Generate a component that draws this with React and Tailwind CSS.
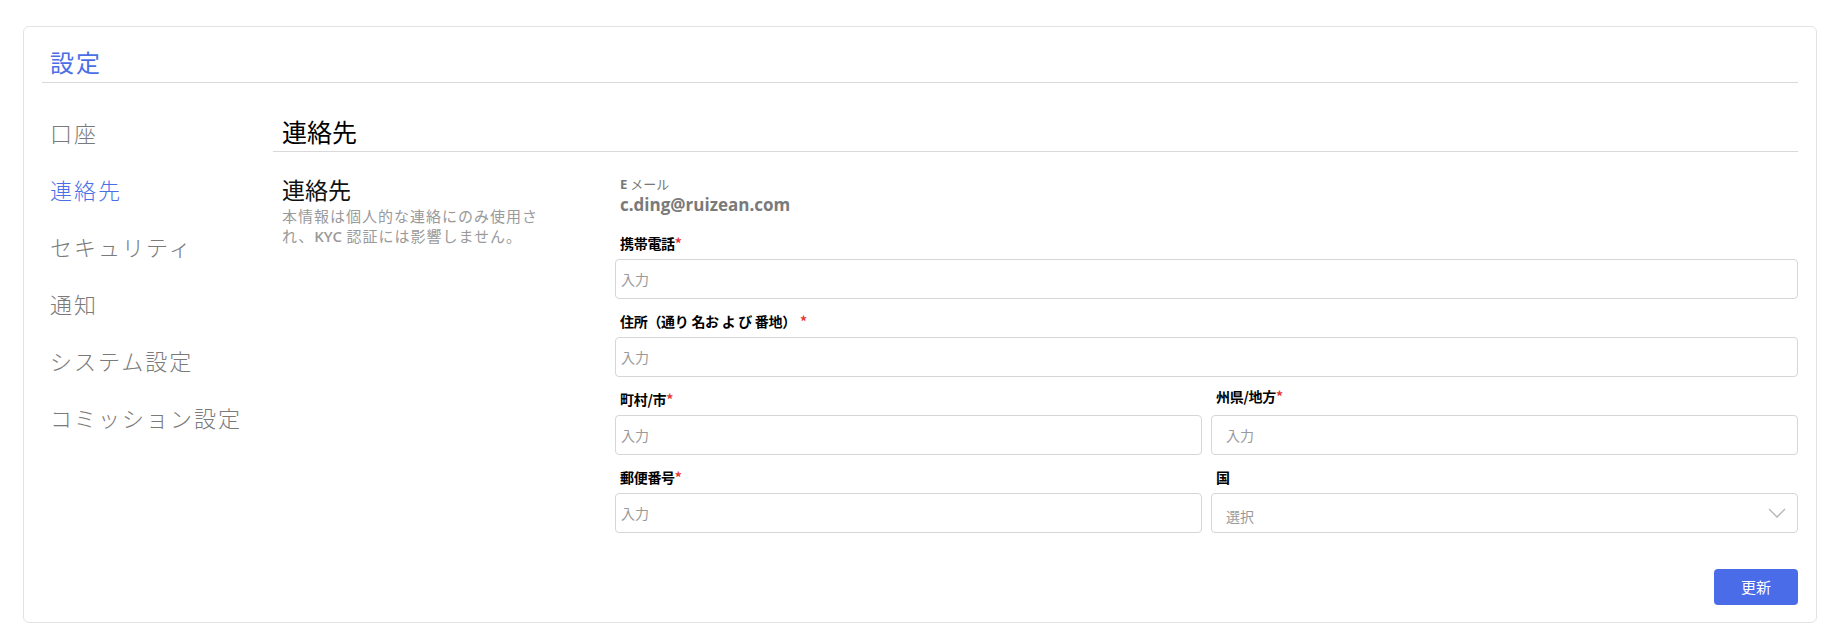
import React from "react";

const JP = { fontFamily: '"Noto Sans CJK JP", "Noto Sans", sans-serif' };
const LAT = { fontFamily: '"Open Sans", "Noto Sans CJK JP", sans-serif' };

function Label({ children, required = true, className = "" }) {
  return (
    <div
      className={"h-[20px] leading-[20px] mb-[6px] text-[14px] font-bold text-black tracking-[-0.3px] " + className}
      style={JP}
    >
      {children}
      {required && <span className="text-[#e53935]">*</span>}
    </div>
  );
}

function Input({ wide = false }) {
  return (
    <div
      className={
        "h-[40px] rounded-[4px] border border-[#d6d6d6] flex items-center text-[14px] text-[#9a9a9a] bg-white " +
        (wide ? "pl-[14px]" : "pl-[5px]")
      }
      style={JP}
    >
      入力
    </div>
  );
}

export default function App() {
  const nav = ["口座", "連絡先", "セキュリティ", "通知", "システム設定", "コミッション設定"];
  return (
    <div className="w-[1836px] h-[640px] bg-white pt-[26px] pl-[23px] pr-[19px]" style={JP}>
      <div className="h-[597px] rounded-[6px] border border-[#e3e3e3] px-[18px] pt-[18px]">
        {/* title */}
        <div className="border-b border-[#d9d9d9] pb-[3px] pl-[8px]">
          <div className="text-[24px] leading-[34px] text-[#4a6ee6] tracking-[2px]" style={JP}>
            設定
          </div>
        </div>

        {/* body */}
        <div className="flex mt-[32px]">
          {/* sidebar */}
          <div className="w-[231px] pl-[8px] pt-[2px] flex flex-col gap-[27px]">
            {nav.map((n) => (
              <div
                key={n}
                className={
                  "text-[22px] leading-[30px] tracking-[2px] font-light " +
                  (n === "連絡先" ? "text-[#4a6ee6]" : "text-[#7a7a7a]")
                }
                style={JP}
              >
                {n}
              </div>
            ))}
          </div>

          {/* main section */}
          <div className="flex-1">
            <div className="border-b border-[#d9d9d9] pb-[4px] pl-[9px]">
              <div className="text-[25px] leading-[32px] text-black" style={JP}>
                連絡先
              </div>
            </div>

            <div className="flex pt-[22px]">
              {/* left description column */}
              <div className="w-[342px] pl-[9px]">
                <div className="text-[23px] leading-[30px] text-[#111]" style={JP}>
                  連絡先
                </div>
                <div
                  className="mt-[2px] max-w-[265px] text-[15px] leading-[20px] tracking-[1px] text-[#9a9a9a]"
                  style={JP}
                >
                  本情報は個人的な連絡にのみ使用され、<span style={LAT} className="font-semibold tracking-[0px]">KYC</span> 認証には影響しません。
                </div>
              </div>

              {/* form */}
              <div className="flex-1 pt-[1px]">
                <div className="pl-[5px] text-[13px] leading-[18px] text-[#777]" style={JP}>
                  <span style={LAT} className="font-bold">E</span> メール
                </div>
                <div className="pl-[5px] text-[17px] leading-[24px] font-bold text-[#7a7a7a]" style={LAT}>
                  c.ding@ruizean.com
                </div>

                <div className="mt-[16px]">
                  <Label className="pl-[5px]">携帯電話</Label>
                  <Input />
                </div>

                <div className="mt-[12px]">
                  <Label className="pl-[5px]">
                    住所（通り 名お よ び 番地）<span className="ml-[4px]"></span>
                  </Label>
                  <Input />
                </div>

                <div className="mt-[12px] grid grid-cols-2 gap-x-[9px]">
                  <div>
                    <Label className="pl-[5px]">町村/市</Label>
                    <Input />
                  </div>
                  <div>
                    <Label className="pl-[5px] -mt-[3px] mb-[9px]">州県/地方</Label>
                    <Input wide />
                  </div>
                </div>

                <div className="mt-[12px] grid grid-cols-2 gap-x-[9px]">
                  <div>
                    <Label className="pl-[5px]">郵便番号</Label>
                    <Input />
                  </div>
                  <div>
                    <Label className="pl-[5px]" required={false}>国</Label>
                    <div
                      className="h-[40px] rounded-[4px] border border-[#d6d6d6] flex items-center justify-between pl-[14px] pr-[11px] text-[14px] text-[#9a9a9a] bg-white"
                      style={JP}
                    >
                      <span className="pt-[6px]">選択</span>
                      <svg width="18" height="10" viewBox="0 0 18 10" fill="none">
                        <polyline points="1,1 9,9 17,1" stroke="#b5b5b5" strokeWidth="1.3" fill="none" />
                      </svg>
                    </div>
                  </div>
                </div>

                <div className="flex justify-end mt-[36px]">
                  <button
                    className="w-[84px] h-[36px] rounded-[4px] bg-[#4a6ce8] text-white text-[15px]"
                    style={JP}
                  >
                    更新
                  </button>
                </div>
              </div>
            </div>
          </div>
        </div>
      </div>
    </div>
  );
}
